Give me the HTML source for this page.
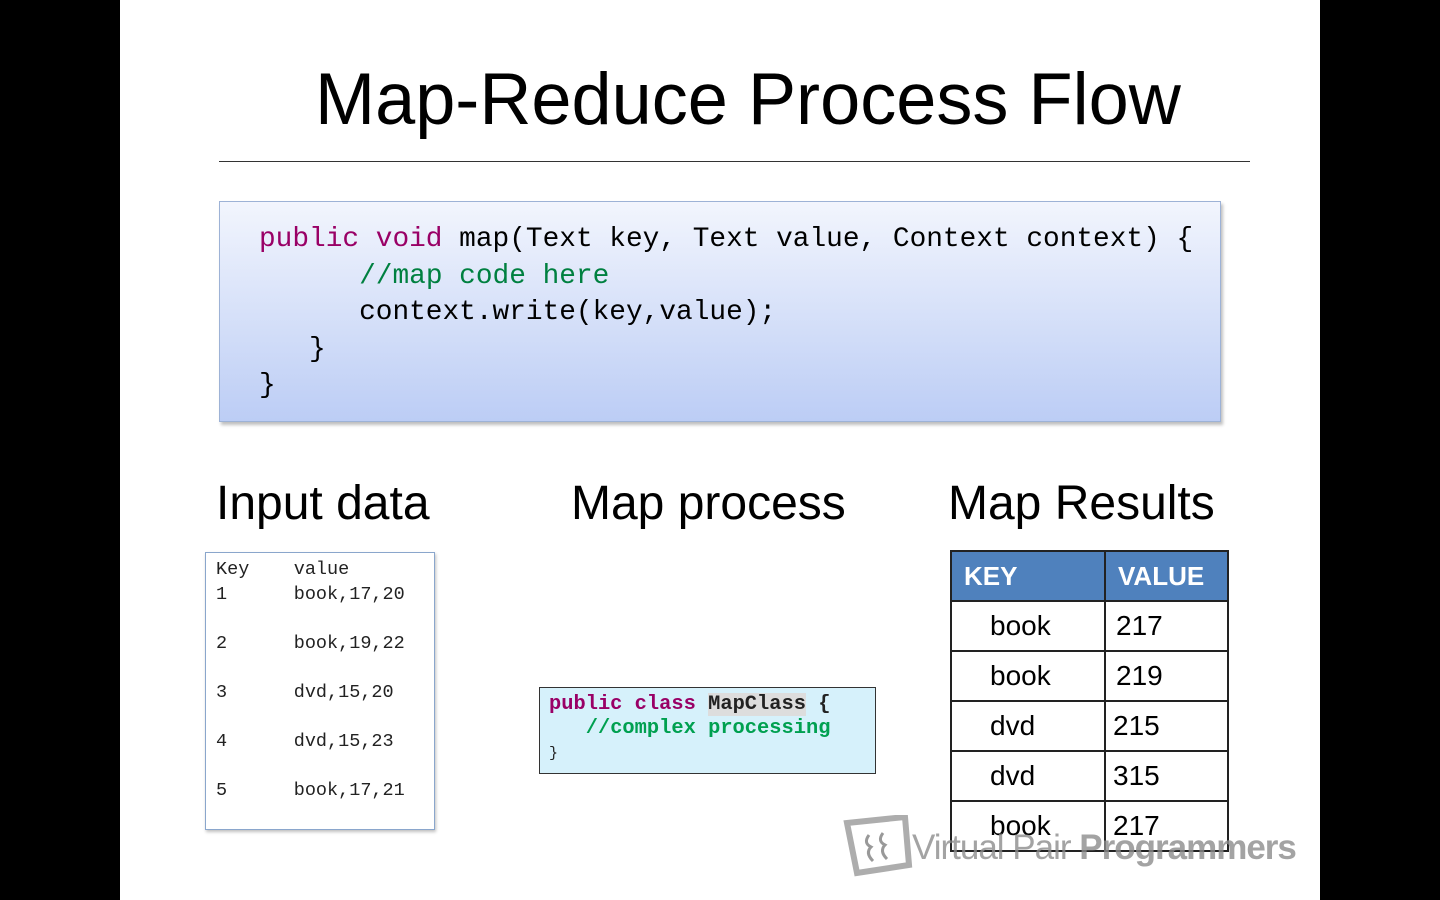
<!DOCTYPE html>
<html><head><meta charset="utf-8"><style>
body{margin:0;width:1440px;height:900px;background:#000;position:relative;overflow:hidden;font-family:"Liberation Sans",sans-serif}
.slide{position:absolute;left:120px;top:0;width:1200px;height:900px;background:#fff}
.a{position:absolute;white-space:pre}
.mono{font-family:"Liberation Mono",monospace}
.code{position:absolute;left:219px;top:201px;width:1000px;height:219px;border:1px solid #9db2d6;background:linear-gradient(#f2f5fd,#bccdf5);box-shadow:2px 3px 3px rgba(0,0,0,.25)}
.kw{color:#990066}.cm{color:#008040}
.h{font-size:48px;color:#000}
table{border-collapse:collapse;position:absolute;left:950px;top:550px;width:279px}
td{border:2px solid #222;height:48px;font-size:28px;padding:0}
</style></head><body>
<div class="slide"></div>
<div class="a" style="left:315px;top:58px;font-size:73px;letter-spacing:0px;transform:scaleX(0.988);transform-origin:left">Map-Reduce Process Flow</div>
<div style="position:absolute;left:219px;top:161px;width:1031px;height:1px;background:#333"></div>
<div class="code"></div>
<div class="a mono" style="left:259px;top:222px;font-size:27.8px;line-height:36.5px"><span class="kw">public void</span> map(Text key, Text value, Context context) {
      <span class="cm">//map code here</span>
      context.write(key,value);
   }
}</div>
<div class="a h" style="left:216px;top:476px">Input data</div>
<div class="a h" style="left:571px;top:476px">Map process</div>
<div class="a h" style="left:948px;top:476px">Map Results</div>
<div style="position:absolute;left:205px;top:552px;width:228px;height:276px;border:1px solid #8aa6cc;box-shadow:1px 2px 3px rgba(0,0,0,.25)"></div>
<div class="a mono" style="left:216px;top:558px;font-size:18.5px;line-height:24.5px;color:#222">Key    value
1      book,17,20

2      book,19,22

3      dvd,15,20

4      dvd,15,23

5      book,17,21</div>
<div style="position:absolute;left:539px;top:687px;width:335px;height:85px;border:1px solid #333;background:#d6f1fb"></div>
<div class="a mono" style="left:549px;top:693px;font-size:20.4px;line-height:24px;font-weight:bold;color:#222"><span class="kw">public class</span> <span style="background:#ddd">MapClass</span> {
   <span style="color:#00a050">//complex processing</span>
<span style="font-weight:normal;font-size:15px">}</span></div>
<table>
<tr style="background:#4f81bd;color:#fff;font-weight:bold"><td style="padding-left:12px;width:140px;font-size:26px">KEY</td><td style="padding-left:12px;font-size:26px">VALUE</td></tr>
<tr><td style="padding-left:38px">book</td><td style="padding-left:10px">217</td></tr>
<tr><td style="padding-left:38px">book</td><td style="padding-left:10px">219</td></tr>
<tr><td style="padding-left:38px">dvd</td><td style="padding-left:7px">215</td></tr>
<tr><td style="padding-left:38px">dvd</td><td style="padding-left:7px">315</td></tr>
<tr><td style="padding-left:38px">book</td><td style="padding-left:7px">217</td></tr>
</table>
<svg style="position:absolute;left:843px;top:815px" width="70" height="62"><polygon points="4,8 62,2 66,50 14,58" fill="none" stroke="#999" stroke-width="6" opacity=".8"/><path d="M26,20 q-6,8 2,12 q-6,6 2,14 M40,18 q-6,8 2,12 q-6,6 2,14" fill="none" stroke="#999" stroke-width="3"/></svg>
<div class="a" style="left:912px;top:828px;font-size:35px;letter-spacing:-1px;color:rgba(140,140,140,.8)"><span style="font-weight:200">Virtual Pair </span><b>Programmers</b></div>
</body></html>
